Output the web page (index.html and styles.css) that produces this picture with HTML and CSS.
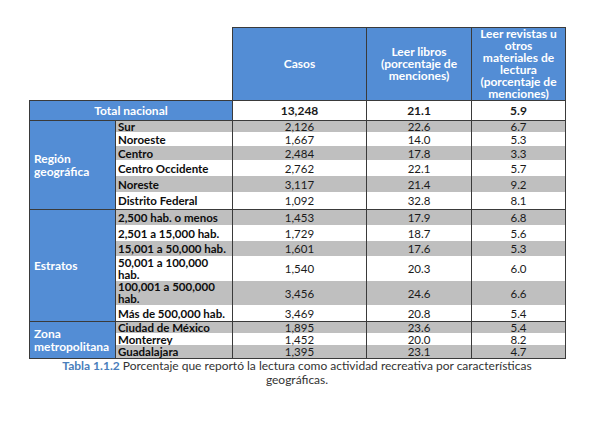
FILE: index.html
```html
<!DOCTYPE html>
<html lang="es">
<head>
<meta charset="utf-8">
<link rel="stylesheet" href="styles.css">
</head>
<body>
<div class="page">
  <table class="data">
    <colgroup>
      <col class="c-group">
      <col class="c-label">
      <col class="c-casos">
      <col class="c-libros">
      <col class="c-rev">
    </colgroup>
    <tr class="head">
      <td colspan="2" class="blank"></td>
      <th>Casos</th>
      <th>Leer libros<br>(porcentaje de<br>menciones)</th>
      <th>Leer revistas u<br>otros<br>materiales de<br>lectura<br>(porcentaje de<br>menciones)</th>
    </tr>
    <tr class="total">
      <th colspan="2">Total nacional</th>
      <td>13,248</td>
      <td>21.1</td>
      <td>5.9</td>
    </tr>
    <tr class="g h11 first">
      <th rowspan="6" class="group">Región<br>geográfica</th>
      <td class="lbl">Sur</td><td>2,126</td><td>22.6</td><td>6.7</td>
    </tr>
    <tr class="h14"><td class="lbl">Noroeste</td><td>1,667</td><td>14.0</td><td>5.3</td></tr>
    <tr class="g h14"><td class="lbl">Centro</td><td>2,484</td><td>17.8</td><td>3.3</td></tr>
    <tr class="h16"><td class="lbl">Centro Occidente</td><td>2,762</td><td>22.1</td><td>5.7</td></tr>
    <tr class="g h16"><td class="lbl">Noreste</td><td>3,117</td><td>21.4</td><td>9.2</td></tr>
    <tr class="h17"><td class="lbl">Distrito Federal</td><td>1,092</td><td>32.8</td><td>8.1</td></tr>
    <tr class="g h15 first">
      <th rowspan="6" class="group">Estratos</th>
      <td class="lbl">2,500 hab. o menos</td><td>1,453</td><td>17.9</td><td>6.8</td>
    </tr>
    <tr class="h16"><td class="lbl">2,501 a 15,000 hab.</td><td>1,729</td><td>18.7</td><td>5.6</td></tr>
    <tr class="g h15"><td class="lbl">15,001 a 50,000 hab.</td><td>1,601</td><td>17.6</td><td>5.3</td></tr>
    <tr class="h25"><td class="lbl two">50,001 a 100,000<br>hab.</td><td>1,540</td><td>20.3</td><td>6.0</td></tr>
    <tr class="g h21"><td class="lbl two">100,001 a 500,000<br>hab.</td><td>3,456</td><td>24.6</td><td>6.6</td></tr>
    <tr class="h16"><td class="lbl">Más de 500,000 hab.</td><td>3,469</td><td>20.8</td><td>5.4</td></tr>
    <tr class="g h11 first">
      <th rowspan="3" class="group">Zona<br>metropolitana</th>
      <td class="lbl">Ciudad de México</td><td>1,895</td><td>23.6</td><td>5.4</td>
    </tr>
    <tr class="h12"><td class="lbl">Monterrey</td><td>1,452</td><td>20.0</td><td>8.2</td></tr>
    <tr class="g h13"><td class="lbl">Guadalajara</td><td>1,395</td><td>23.1</td><td>4.7</td></tr>
  </table>
  <p class="caption"><span class="tag">Tabla 1.1.2</span> Porcentaje que reportó la lectura como actividad recreativa por características geográficas.</p>
</div>
</body>
</html>
```
FILE: styles.css
```css
html, body {
  margin: 0;
  padding: 0;
  background: #ffffff;
}

.page {
  padding: 27px 0 0 29px;
  width: 536px;
  font-family: "Lato", "Liberation Sans", sans-serif;
  color: #111;
}

.data {
  border-collapse: collapse;
  width: 536px;
  table-layout: fixed;
  font-size: 11.5px;
  line-height: 11px;
}

.c-group { width: 86px; }
.c-label { width: 117px; }
.c-casos { width: 134px; }
.c-libros { width: 105px; }
.c-rev { width: 94px; }

.data td, .data th {
  padding: 0 2px;
  text-align: center;
  vertical-align: middle;
  border-left: 1px solid #3a3a3a;
  border-right: 1px solid #3a3a3a;
  color: #1a1a1a;
}

.head th {
  background: #538dd5;
  color: #fff;
  font-weight: 700;
  font-size: 12px;
  height: 71px;
  line-height: 12px;
  border: 1px solid #3a3a3a;
  padding: 0;
}

.head .blank {
  border: none;
  background: #fff;
}

.total th, .total td {
  height: 19px;
  border: 1px solid #3a3a3a;
  font-weight: 700;
  font-size: 12px;
}

.data .total th {
  background: #538dd5;
  color: #fff;
}

.total td {
  background: #fff;
}

.data .group {
  background: #538dd5;
  color: #fff;
  font-weight: 700;
  font-size: 12px;
  text-align: left;
  padding-left: 4px;
  line-height: 13px;
  border-bottom: 1px solid #3a3a3a;
}

.data .lbl {
  text-align: left;
  font-weight: 700;
  font-size: 11.5px;
  border-left: none;
  padding: 0 0 0 2px;
  color: #0d0d0d;
  white-space: nowrap;
  overflow: hidden;
}

.data .two {
  line-height: 12px;
  white-space: normal;
}

.g td {
  background: #bfbfbf;
}

.first td, .first th {
  border-top: 1px solid #3a3a3a;
}

.data tr:last-child td {
  border-bottom: 1px solid #3a3a3a;
}

.h11 td { height: 11px; }
.h12 td { height: 12px; }
.h13 td { height: 13px; }
.h14 td { height: 14px; }
.h15 td { height: 15px; }
.h16 td { height: 16px; }
.h17 td { height: 17px; }
.h21 td { height: 21px; }
.h25 td { height: 25px; }

.caption {
  margin: 0 auto 0 30px;
  width: 476px;
  text-align: center;
  font-size: 12px;
  line-height: 14px;
  color: #333;
}

.caption .tag {
  color: #4a7ebb;
  font-weight: 700;
}
```
